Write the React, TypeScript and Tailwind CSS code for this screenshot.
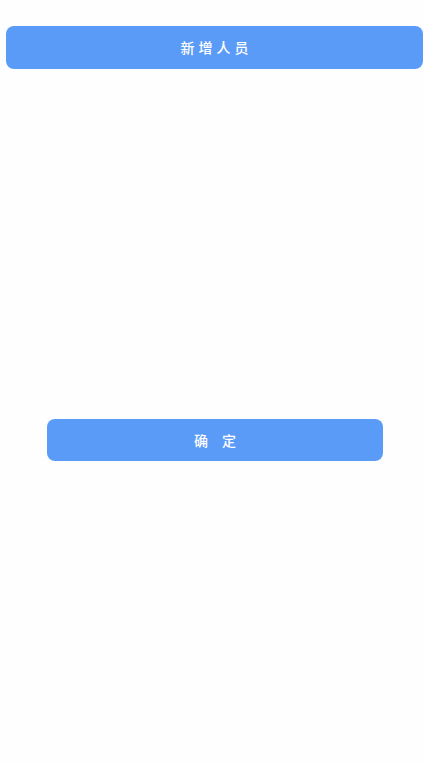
export default function App() {
  return (
    <div
      className="min-h-[764px] w-full bg-[#fefefe] pt-[26px]"
      style={{ fontFamily: '"Noto Sans CJK SC", "Noto Sans", sans-serif' }}
    >
      <button
        type="button"
        className="ml-[6px] flex h-[43px] w-[417px] items-center justify-center rounded-[8px] bg-[#5b9bf8] text-[14px] font-medium tracking-[4px] text-white"
      >
        <span className="pl-[4px]">新增人员</span>
      </button>

      <div className="h-[350px]" />

      <button
        type="button"
        className="ml-[47px] flex h-[42px] w-[336px] items-center justify-center gap-[14px] rounded-[8px] bg-[#5b9bf8] text-[14px] font-medium text-white"
      >
        <span>确</span>
        <span>定</span>
      </button>
    </div>
  );
}
